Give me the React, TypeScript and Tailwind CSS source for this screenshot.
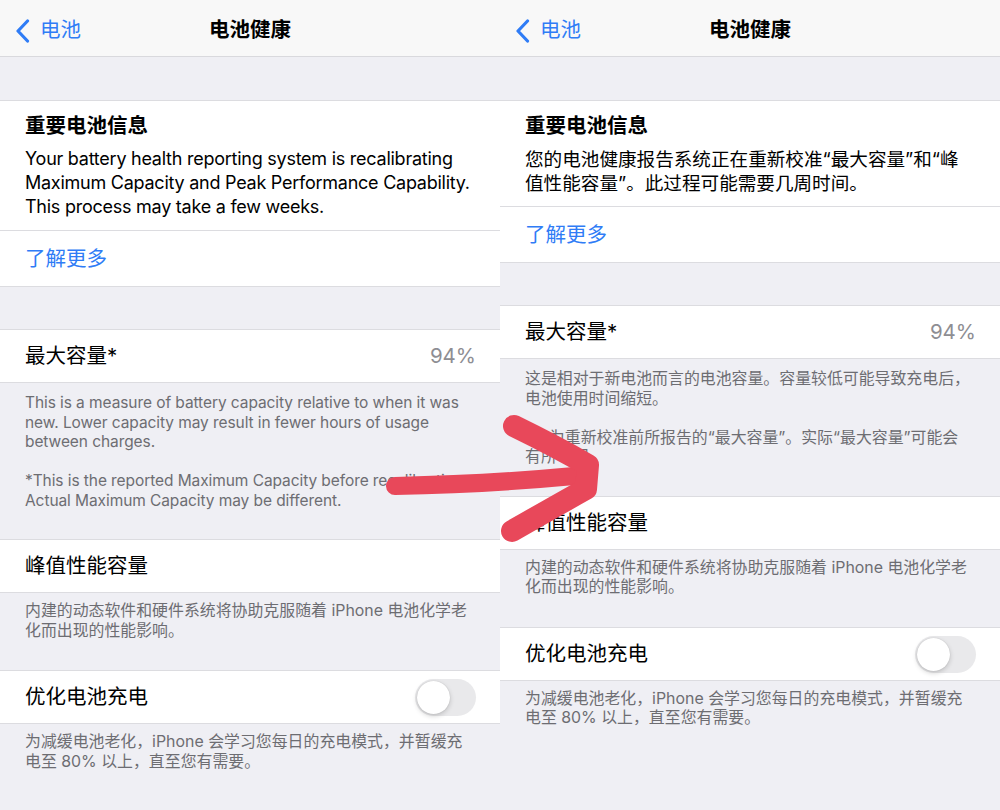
import React from "react";

type Note = string[][];

type PanelProps = {
  intro: string[];
  introClass: string;
  capacityNote: Note;
  capacityClass: string;
  peakNote: string[];
  chargeNote: string[];
};

const FOOT = "text-[#6d6d72] leading-[19.5px]";
const FOOT_EN = "text-[15.5px] tracking-[-0.08px]";
const FOOT_CJK = "text-[15.9px]";

const Lines: React.FC<{ lines: string[]; className?: string }> = ({ lines, className }) => (
  <div className={className}>
    {lines.map((l, i) => (
      <div key={i} className="whitespace-nowrap">
        {l}
      </div>
    ))}
  </div>
);

const Toggle: React.FC = () => (
  <div className="w-[61px] h-[37px] rounded-full bg-[#e9e9eb] flex items-center p-[2px]">
    <div className="w-[33px] h-[33px] rounded-full bg-white shadow-[0_2px_5px_rgba(0,0,0,0.18),0_0_1px_rgba(0,0,0,0.2)]" />
  </div>
);

const Row: React.FC<{ label: string; right?: React.ReactNode }> = ({ label, right }) => (
  <div className="bg-white border-y border-[#dcdce0] h-[54px] flex items-center justify-between pl-[25px] pr-[24px] pt-[1px]">
    <span className="text-[20.5px] text-black">{label}</span>
    {right}
  </div>
);

const Panel: React.FC<PanelProps> = ({ intro, introClass, capacityNote, capacityClass, peakNote, chargeNote }) => (
  <section className="w-[500px] h-full bg-[#efeff4] flex flex-col">
    {/* Nav bar */}
    <header className="h-[57px] shrink-0 bg-[#f8f8f8] border-b border-[#d9d9dd] grid grid-cols-3 items-center pt-[5px]">
      <div className="flex items-center pl-[15px] gap-[10px] text-[#2f7cf6]">
        <svg width="15" height="24" viewBox="0 0 15 24" fill="none">
          <path d="M12.5 2 L3 12 L12.5 22" stroke="#2f7cf6" strokeWidth="3.2" strokeLinecap="round" strokeLinejoin="round" />
        </svg>
        <span className="text-[20.5px]">电池</span>
      </div>
      <div className="text-center text-[20.5px] font-semibold text-black">电池健康</div>
      <div />
    </header>

    {/* Important battery message */}
    <div className="mt-[43px] bg-white border-y border-[#dcdce0]">
      <div className="pl-[25px] pt-[12px] pb-[11px] border-b border-[#dcdce0]">
        <div className="text-[20.5px] leading-[26px] font-semibold text-black">重要电池信息</div>
        <Lines lines={intro} className={`mt-[8px] leading-[24px] text-black ${introClass}`} />
      </div>
      <div className="h-[55px] flex items-center pl-[25px] pt-[2px] text-[20.5px] text-[#2f7cf6]">了解更多</div>
    </div>

    <div className="mt-[42px]">
      <Row label="最大容量*" right={<span className="text-[20.5px] text-[#8e8e93]">94%</span>} />
      <div className={`px-[25px] pt-[10px] pb-[29px] ${FOOT} ${capacityClass}`}>
        {capacityNote.map((p, i) => (
          <Lines key={i} lines={p} className={i > 0 ? "mt-[19.5px]" : ""} />
        ))}
      </div>
    </div>

    <div>
      <Row label="峰值性能容量" />
      <Lines lines={peakNote} className={`px-[25px] pt-[8px] pb-[30px] ${FOOT} ${FOOT_CJK}`} />
    </div>

    <div>
      <Row label="优化电池充电" right={<Toggle />} />
      <Lines lines={chargeNote} className={`px-[25px] pt-[8px] ${FOOT} ${FOOT_CJK}`} />
    </div>
  </section>
);

const PEAK = ["内建的动态软件和硬件系统将协助克服随着 iPhone 电池化学老", "化而出现的性能影响。"];
const CHARGE = ["为减缓电池老化，iPhone 会学习您每日的充电模式，并暂缓充", "电至 80% 以上，直至您有需要。"];

export default function App() {
  return (
    <div className="relative w-[1000px] h-[810px] overflow-hidden flex bg-[#efeff4] font-['Inter','Noto_Sans_CJK_SC',sans-serif] antialiased">
      <Panel
        intro={[
          "Your battery health reporting system is recalibrating",
          "Maximum Capacity and Peak Performance Capability.",
          "This process may take a few weeks.",
        ]}
        introClass="text-[18px] tracking-[-0.25px]"
        capacityNote={[
          [
            "This is a measure of battery capacity relative to when it was",
            "new. Lower capacity may result in fewer hours of usage",
            "between charges.",
          ],
          [
            "*This is the reported Maximum Capacity before recalibration.",
            "Actual Maximum Capacity may be different.",
          ],
        ]}
        capacityClass={FOOT_EN}
        peakNote={PEAK}
        chargeNote={CHARGE}
      />
      <Panel
        intro={["您的电池健康报告系统正在重新校准“最大容量”和“峰", "值性能容量”。此过程可能需要几周时间。"]}
        introClass="text-[18.6px]"
        capacityNote={[
          ["这是相对于新电池而言的电池容量。容量较低可能导致充电后，", "电池使用时间缩短。"],
          ["*此为重新校准前所报告的“最大容量”。实际“最大容量”可能会", "有所不同。"],
        ]}
        capacityClass={FOOT_CJK}
        peakNote={PEAK}
        chargeNote={CHARGE}
      />

      {/* Hand-drawn red arrow over both screenshots */}
      <svg className="absolute inset-0 pointer-events-none" width="1000" height="810" viewBox="0 0 1000 810" fill="none">
        <path d="M395 486 Q490 484 574 476" stroke="#e8485a" strokeWidth="18" strokeLinecap="round" />
        <path
          d="M514 426 Q555 446 588 465 L586 489 Q552 508 512 531"
          stroke="#e8485a"
          strokeWidth="22"
          strokeLinecap="round"
          strokeLinejoin="round"
        />
      </svg>
    </div>
  );
}
